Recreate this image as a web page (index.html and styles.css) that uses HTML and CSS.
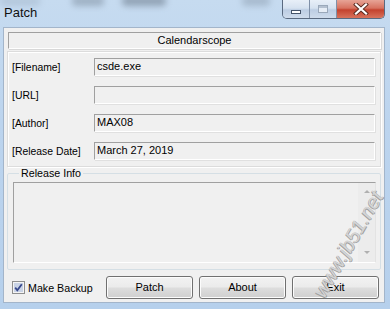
FILE: index.html
```html
<!DOCTYPE html>
<html>
<head>
<meta charset="utf-8">
<link rel="stylesheet" href="styles.css">
</head>
<body>
<div class="window">
  <div class="titlebar">
    <div class="blob b1"></div>
    <div class="blob b2"></div>
    <div class="blob b3"></div>
    <div class="blob b4"></div>
    <span class="title">Patch</span>
    <div class="caption">
      <div class="cbtn cmin"><span class="minbar"></span></div>
      <div class="cbtn cmax"><span class="maxbox"></span></div>
      <div class="cbtn cclose">
        <svg width="16" height="12" viewBox="0 0 16 12"><path d="M3 1.5 L13 10.5 M13 1.5 L3 10.5" stroke="#5a2a20" stroke-width="4" stroke-linecap="square"/><path d="M3 1.5 L13 10.5 M13 1.5 L3 10.5" stroke="#ffffff" stroke-width="2.2" stroke-linecap="square"/></svg>
      </div>
    </div>
  </div>
  <div class="client">
    <div class="header">Calendarscope</div>
    <div class="panel">
      <div class="row"><span class="lbl">[Filename]</span><div class="field">csde.exe</div></div>
      <div class="row"><span class="lbl">[URL]</span><div class="field"></div></div>
      <div class="row"><span class="lbl">[Author]</span><div class="field">MAX08</div></div>
      <div class="row"><span class="lbl">[Release Date]</span><div class="field">March 27, 2019</div></div>
    </div>
    <fieldset class="group">
      <legend>Release Info</legend>
      <div class="memo">
        <div class="memo-text"></div>
        <div class="vscroll"><span class="up"></span><span class="down"></span></div>
      </div>
    </fieldset>
    <div class="bottom">
      <label class="check">
        <svg width="13" height="13" viewBox="0 0 13 13"><rect x="0.5" y="0.5" width="12" height="12" fill="#f4f4f4" stroke="#8e8f8f"/><rect x="2" y="2" width="9" height="9" fill="#c9d3e6"/><path d="M3.2 6.6 L5.3 9.2 L9.8 3.2" fill="none" stroke="#37488c" stroke-width="1.8"/></svg>
        <span>Make Backup</span>
      </label>
      <div class="buttons">
        <div class="btn">Patch</div>
        <div class="btn">About</div>
        <div class="btn">Exit</div>
      </div>
    </div>
  </div>
  <div class="watermark">www.jb51.net</div>
</div>
</body>
</html>
```
FILE: styles.css
```css
* { box-sizing: border-box; }
html, body { margin: 0; padding: 0; }
body {
  width: 390px;
  height: 309px;
  overflow: hidden;
  font-family: "Liberation Sans", Arial, sans-serif;
  font-size: 10.7px;
  color: #000;
  background: linear-gradient(180deg, #c6dbf0 0%, #bcd4ee 40%, #b6d0ec 100%);
}
.window {
  position: relative;
  width: 390px;
  height: 309px;
  display: flex;
  flex-direction: column;
}
.titlebar {
  position: relative;
  height: 27px;
  display: flex;
  align-items: flex-start;
  justify-content: space-between;
  overflow: hidden;
}
.blob {
  position: absolute;
  top: -4px;
  height: 10px;
  background: #6f7f90;
  filter: blur(3px);
  opacity: 0.45;
  border-radius: 4px;
}
.b1 { left: 72px; width: 32px; }
.b2 { left: 122px; width: 44px; opacity: 0.6; }
.b3 { left: 242px; width: 28px; opacity: 0.35; }
.b4 { left: 0; width: 40px; opacity: 0.2; }
.title {
  position: relative;
  margin: 5px 0 0 4px;
  font-size: 13px;
  color: #111;
  line-height: 16px;
}
.caption {
  position: relative;
  display: flex;
  margin-right: 5px;
  height: 19px;
  border: 1px solid #5a6a80;
  border-top: none;
  border-radius: 0 0 5px 5px;
  overflow: hidden;
}
.cbtn {
  height: 18px;
  display: flex;
  align-items: center;
  justify-content: center;
}
.cmin, .cmax {
  width: 27px;
  background: linear-gradient(180deg, #e8eff8 0%, #d6e2f0 45%, #bccde3 55%, #cfdcec 100%);
  border-right: 1px solid #7f90a8;
}
.minbar {
  display: block;
  width: 10px;
  height: 4px;
  margin-top: 5px;
  background: #fff;
  border: 1px solid #45546a;
}
.maxbox {
  display: block;
  width: 10px;
  height: 8px;
  border: 1px solid #9aa8ba;
  background: #e6edf6;
  box-shadow: inset 0 2px 0 #b4c0d0;
}
.cclose {
  width: 47px;
  background: linear-gradient(180deg, #e7a496 0%, #d77260 45%, #c4422e 55%, #d8735c 100%);
}
.client {
  margin: 0 5px 6px 3px;
  height: 276px;
  background: #f0f0f0;
  border: 1px solid #a3b5ca;
  padding: 4px 3px 0 3px;
  display: flex;
  flex-direction: column;
}
.header {
  margin-left: 1px;
  height: 17px;
  border-top: 1px solid #a0a0a0;
  border-left: 1px solid #a0a0a0;
  border-right: 1px solid #ffffff;
  border-bottom: 1px solid #ffffff;
  box-shadow: 1px 1px 0 #d8d8d8;
  text-align: center;
  line-height: 15px;
  font-size: 11px;
}
.panel {
  margin-top: 2px;
  height: 116px;
  border: 1px solid #dcdcdc;
  box-shadow: inset 1px 1px 0 #ffffff, 1px 1px 0 #ffffff;
  padding: 6px 5px 0 4px;
  display: flex;
  flex-direction: column;
  gap: 10px;
}
.row {
  display: flex;
  align-items: center;
  height: 18px;
}
.lbl {
  width: 82px;
  flex: none;
  font-size: 10.4px;
}
.field {
  flex: 1;
  height: 18px;
  border-top: 1px solid #a0a0a0;
  border-left: 1px solid #a0a0a0;
  border-right: 1px solid #ffffff;
  border-bottom: 1px solid #ffffff;
  box-shadow: 1px 1px 0 #e0e0e0;
  padding-left: 2px;
  line-height: 15px;
  font-size: 11px;
}
.group {
  margin: 0;
  height: 103px;
  padding: 2px 4px 6px 5px;
  border: 1px solid #d5dfe5;
  border-radius: 2px;
  min-width: 0;
}
.group legend {
  padding: 0 2px;
  margin-left: 6px;
  line-height: 13px;
}
.memo {
  height: 81px;
  display: flex;
  border-top: 1px solid #a0a0a0;
  border-left: 1px solid #a0a0a0;
  border-right: 1px solid #e3e3e3;
  border-bottom: 1px solid #ffffff;
}
.memo-text { flex: 1; }
.vscroll {
  width: 17px;
  display: flex;
  flex-direction: column;
  align-items: center;
  justify-content: space-between;
  padding: 7px 0 8px;
  background: #ececec;
}
.up, .down {
  width: 0;
  height: 0;
  border-left: 3px solid transparent;
  border-right: 3px solid transparent;
}
.up { border-bottom: 3px solid #b0b0b0; }
.down { border-top: 3px solid #b0b0b0; }
.bottom {
  margin-top: 6px;
  height: 23px;
  display: flex;
  align-items: center;
  justify-content: space-between;
  padding-left: 5px;
  padding-right: 2px;
}
.check {
  display: flex;
  align-items: center;
  gap: 3px;
}
.check svg { display: block; }
.buttons {
  display: flex;
  gap: 6px;
}
.btn {
  width: 87px;
  height: 23px;
  border: 1px solid #707070;
  border-radius: 3px;
  background: linear-gradient(180deg, #f2f2f2 0%, #ebebeb 48%, #dddddd 52%, #cfcfcf 100%);
  box-shadow: inset 0 0 0 1px #fcfcfc;
  text-align: center;
  line-height: 21px;
  font-size: 11px;
}
.watermark {
  position: absolute;
  left: 280px;
  top: 232px;
  width: 136px;
  height: 24px;
  line-height: 24px;
  text-align: center;
  font-size: 20px;
  font-style: italic;
  color: #d4d4d4;
  text-shadow: -1px 0 0 #a0a0a0, 0 1px 0 #a0a0a0;
  transform: rotate(-60deg);
}
```
